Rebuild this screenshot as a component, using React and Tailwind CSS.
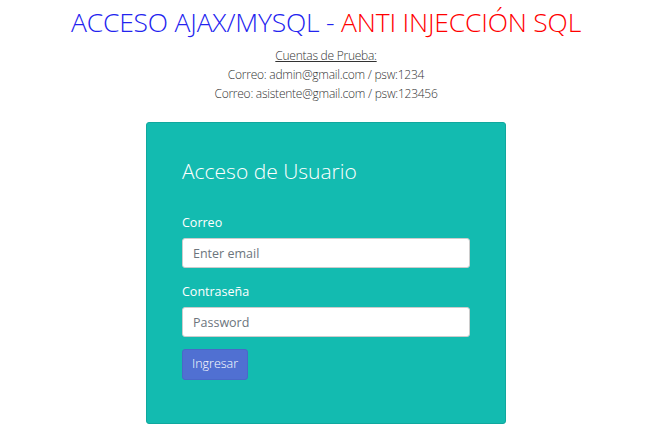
import React from 'react';

const App = () => {
  return (
    <div className="w-[669px] h-[443px] bg-white font-['Open_Sans',sans-serif] overflow-hidden">
      <div className="w-[652px]">
        <h1 className="text-center text-[26.5px] leading-[30px] font-light pt-[7px] tracking-[-0.2px]">
          <span className="text-[#2323ef]">ACCESO AJAX/MYSQL - </span>
          <span className="text-[#ff0000]">ANTI INJECCIÓN SQL</span>
        </h1>
        <div className="text-center text-[12px] tracking-[-0.25px] leading-[19px] text-[#333] font-light mt-[9px]">
          <p className="underline">Cuentas de Prueba:</p>
          <p>Correo: admin@gmail.com / psw:1234</p>
          <p>Correo: asistente@gmail.com / psw:123456</p>
        </div>
        <div className="mx-auto mt-[19px] w-[360px] h-[302px] bg-[#13bbb0] border border-[#10a89e] rounded-[3px] pl-[35px] pt-[34px]">
          <h2 className="text-white text-[21px] leading-[28px] font-light">Acceso de Usuario</h2>
          <form className="mt-[29px] w-[288px]" onSubmit={e => e.preventDefault()}>
            <label className="block text-white text-[12.5px] leading-[18px]">Correo</label>
            <input
              type="email"
              placeholder="Enter email"
              className="mt-[6px] w-full h-[30px] bg-white rounded-[3px] border border-[#ccc] px-[10px] text-[12.5px] placeholder:text-[#6c757d] outline-none"
            />
            <label className="block mt-[15px] text-white text-[12.5px] leading-[18px]">Contraseña</label>
            <input
              type="password"
              placeholder="Password"
              className="mt-[6px] w-full h-[30px] bg-white rounded-[3px] border border-[#ccc] px-[10px] text-[12.5px] placeholder:text-[#6c757d] outline-none"
            />
            <button
              type="submit"
              className="block mt-[12px] h-[31px] px-[9px] bg-[#5070d2] border border-[#4a68c8] rounded-[3px] text-white text-[12.5px] font-light"
            >
              Ingresar
            </button>
          </form>
        </div>
      </div>
    </div>
  );
};

export default App;
